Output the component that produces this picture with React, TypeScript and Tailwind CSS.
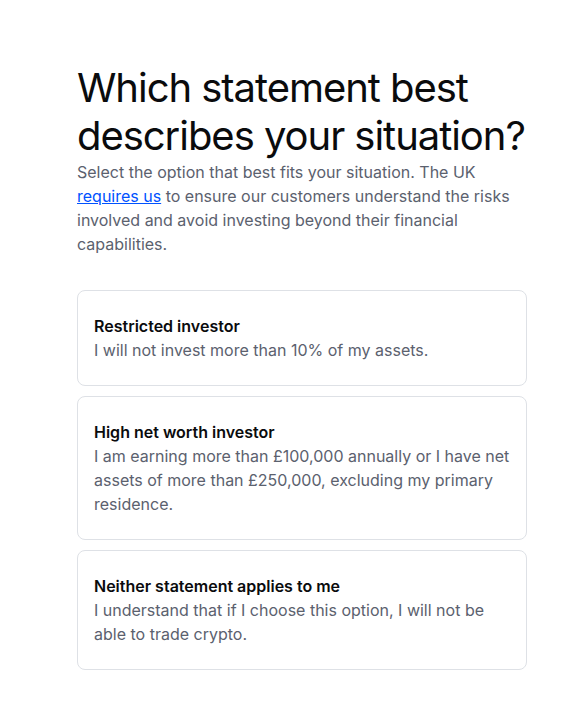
const options = [
  {
    title: "Restricted investor",
    desc: "I will not invest more than 10% of my assets.",
  },
  {
    title: "High net worth investor",
    desc: "I am earning more than £100,000 annually or I have net assets of more than £250,000, excluding my primary residence.",
  },
  {
    title: "Neither statement applies to me",
    desc: "I understand that if I choose this option, I will not be able to trade crypto.",
  },
];

export default function App() {
  return (
    <div className="min-h-screen bg-white font-['Inter',sans-serif] text-[#0a0b0d]">
      <div className="w-[450px] pt-[64px] ml-[77px]">
        <h1 className="w-[490px] text-[40px] leading-[48px] font-normal tracking-[-0.026em]">
          Which statement best
          <br />
          describes your situation?
        </h1>
        <p className="text-base leading-6 text-[#5b616e]">
          Select the option that best fits your situation. The UK{" "}
          <a href="#" className="text-[#0052ff] underline">
            requires us
          </a>{" "}
          to ensure our customers understand the risks involved and avoid investing beyond their financial capabilities.
        </p>

        <div className="mt-[34px] flex flex-col gap-[10px]">
          {options.map((o) => (
            <button
              key={o.title}
              className="w-full rounded-lg border border-[#dee1e6] px-4 py-[23px] text-left"
            >
              <p className="text-base leading-6 font-semibold text-[#0a0b0d]">{o.title}</p>
              <p className="text-base leading-6 text-[#5b616e]">{o.desc}</p>
            </button>
          ))}
        </div>
      </div>
    </div>
  );
}
